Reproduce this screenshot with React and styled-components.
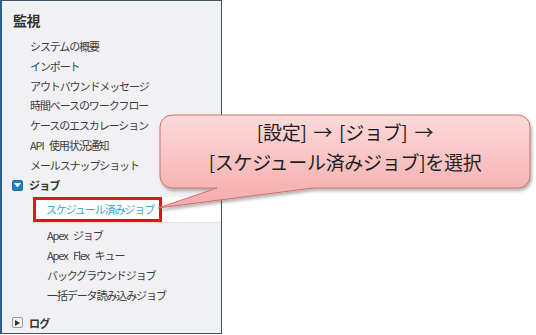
import styled, { createGlobalStyle } from "styled-components";

const GlobalStyle = createGlobalStyle`
  html, body {
    margin: 0;
    padding: 0;
    background: #ffffff;
  }
  body {
    font-family: "Noto Sans CJK JP", "Noto Sans", sans-serif;
    color: #333;
  }
`;

const monitorItems = [
  "システムの概要",
  "インポート",
  "アウトバウンドメッセージ",
  "時間ベースのワークフロー",
  "ケースのエスカレーション",
  "API 使用状況通知",
  "メールスナップショット",
];

const jobItems = [
  "Apex ジョブ",
  "Apex Flex キュー",
  "バックグラウンドジョブ",
  "一括データ読み込みジョブ",
];

const App = () => {
  return (
    <Page>
      <GlobalStyle />
      <Panel>
        <Heading>監視</Heading>
        <List>
          {monitorItems.map((item) => (
            <Item key={item}>{item}</Item>
          ))}
        </List>

        <Group>
          <Toggle $open>
            <svg width="7" height="5" viewBox="0 0 7 5">
              <path d="M0 0 H7 L3.5 4.5 Z" fill="#fff" />
            </svg>
          </Toggle>
          ジョブ
        </Group>

        <SelectedRow>
          <Marked>スケジュール済みジョブ</Marked>
        </SelectedRow>

        <List>
          {jobItems.map((item) => (
            <Item key={item} $sub>
              {item}
            </Item>
          ))}
        </List>

        <Group $last>
          <Toggle>
            <svg width="5" height="6" viewBox="0 0 5 6">
              <path d="M0 0 L5 3 L0 6 Z" fill="#333" />
            </svg>
          </Toggle>
          ログ
        </Group>
      </Panel>

      <Callout>
        <svg width="386" height="108" viewBox="0 0 386 108">
          <defs>
            <linearGradient id="pink" x1="0" y1="0" x2="0" y2="1">
              <stop offset="0" stopColor="#fcdada" />
              <stop offset="1" stopColor="#f5aaaa" />
            </linearGradient>
            <filter id="shade" x="-5%" y="-10%" width="115%" height="130%">
              <feDropShadow dx="1.5" dy="2.5" stdDeviation="1.8" floodColor="#000" floodOpacity="0.3" />
            </filter>
          </defs>
          <path
            d="M22 5 H368 A12 12 0 0 1 380 17 V66 A12 12 0 0 1 368 78 H163 L8 98 L67 78 H22 A12 12 0 0 1 10 66 V17 A12 12 0 0 1 22 5 Z"
            fill="url(#pink)"
            stroke="#d0706c"
            strokeWidth="1"
            filter="url(#shade)"
          />
        </svg>
        <CalloutText>
          [設定] → [ジョブ] →
          <br />
          [スケジュール済みジョブ]を選択
        </CalloutText>
      </Callout>
    </Page>
  );
};

const Page = styled.div`
  position: relative;
  width: 536px;
  height: 335px;
  overflow: hidden;
`;

const Panel = styled.div`
  box-sizing: border-box;
  width: 222px;
  height: 334px;
  background: #f1f1f4;
  border: 1px solid #46526c;
  border-left: 2px solid #2c5f8c;
  padding-top: 9px;
  display: flex;
  flex-direction: column;
`;

const Heading = styled.div`
  padding-left: 11px;
  font-size: 14px;
  font-weight: 700;
  line-height: 20px;
  color: #333;
  letter-spacing: -0.5px;
  margin-bottom: 7px;
`;

const List = styled.div`
  display: flex;
  flex-direction: column;
`;

const Item = styled.div`
  padding-left: ${(p) => (p.$sub ? "45px" : "28px")};
  font-size: 11px;
  line-height: 19.8px;
  height: 19.8px;
  color: #3c3c3c;
  letter-spacing: -1.1px;
  word-spacing: 4px;
  white-space: nowrap;
`;

const Group = styled.div`
  display: flex;
  align-items: center;
  gap: 6px;
  padding-left: 10px;
  height: 19.8px;
  font-size: 11px;
  font-weight: 700;
  color: #333;
  letter-spacing: -0.8px;
  margin-top: ${(p) => (p.$last ? "7.5px" : "0")};
`;

const Toggle = styled.span`
  box-sizing: border-box;
  width: 11px;
  height: 11px;
  border-radius: 2px;
  display: flex;
  align-items: center;
  justify-content: center;
  background: ${(p) => (p.$open ? "#1f82c4" : "#f6f6f6")};
  border: 1px solid ${(p) => (p.$open ? "#1a6fa8" : "#9a9a9a")};
`;

const SelectedRow = styled.div`
  margin: 2px 0 3px 31px;
  height: 25px;
  background: #ffffff;
  border-bottom: 1px solid #e2e2e6;
  display: flex;
`;

const Marked = styled.div`
  box-sizing: border-box;
  width: 129px;
  height: 25px;
  border: 3px solid #e8101a;
  padding-left: 10px;
  font-size: 11px;
  line-height: 19px;
  color: #3aa6cc;
  letter-spacing: -1.1px;
  white-space: nowrap;
`;

const Callout = styled.div`
  position: absolute;
  left: 150px;
  top: 110px;
  width: 386px;
  height: 108px;
`;

const CalloutText = styled.div`
  position: absolute;
  left: 10px;
  top: 7px;
  width: 370px;
  text-align: center;
  font-size: 19px;
  line-height: 30px;
  color: #1e1e1e;
  letter-spacing: -0.3px;
  word-spacing: 3px;
`;

export default App;
